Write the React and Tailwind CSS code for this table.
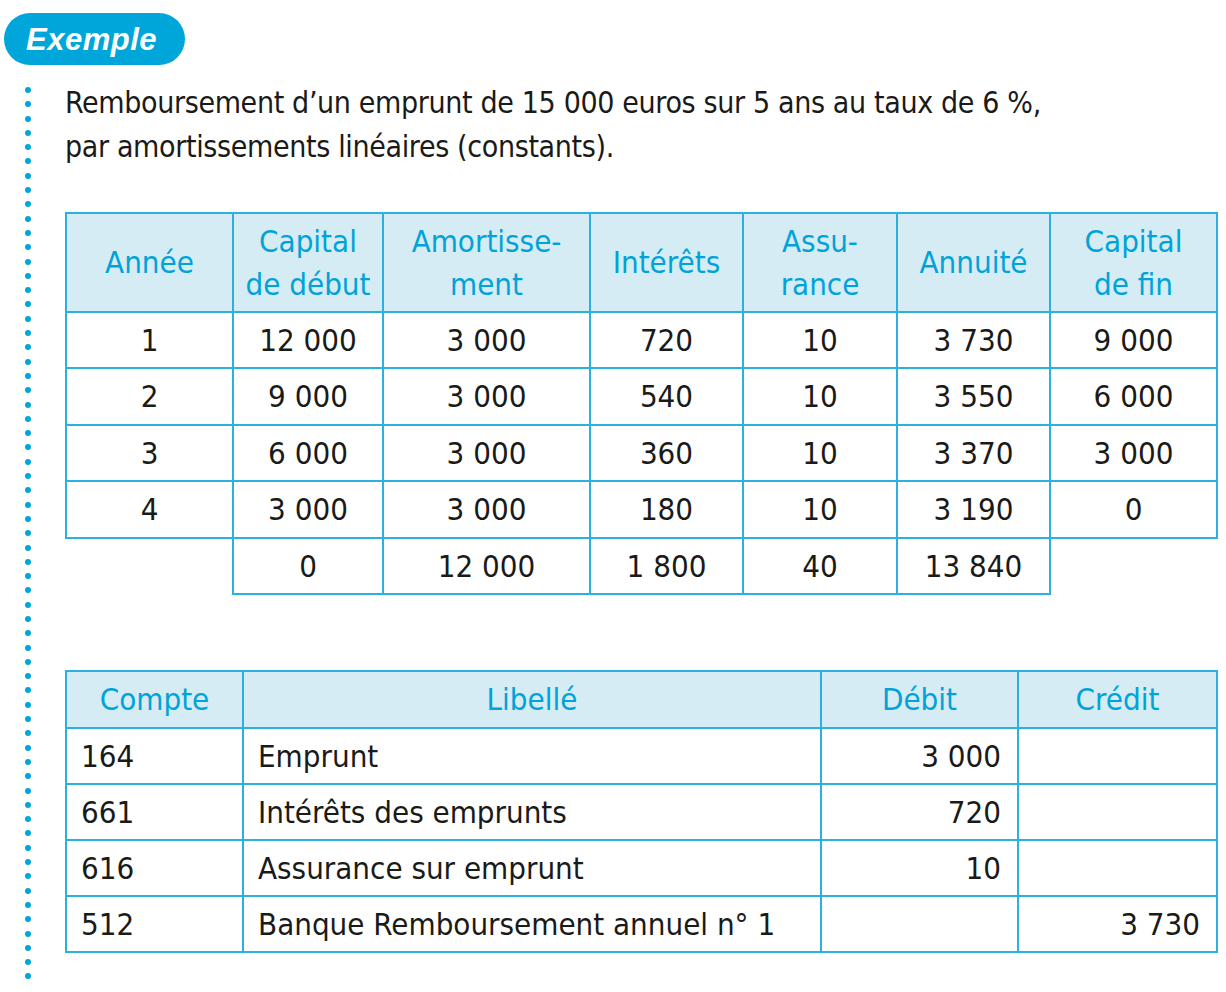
import React from "react";

const FONT = "font-['DejaVu_Sans_Condensed','Liberation_Sans',sans-serif]";

const headers1 = [
  ["Année"],
  ["Capital", "de début"],
  ["Amortisse-", "ment"],
  ["Intérêts"],
  ["Assu-", "rance"],
  ["Annuité"],
  ["Capital", "de fin"],
];

const rows1 = [
  ["1", "12 000", "3 000", "720", "10", "3 730", "9 000"],
  ["2", "9 000", "3 000", "540", "10", "3 550", "6 000"],
  ["3", "6 000", "3 000", "360", "10", "3 370", "3 000"],
  ["4", "3 000", "3 000", "180", "10", "3 190", "0"],
];
const totals = ["0", "12 000", "1 800", "40", "13 840"];
const widths1 = [167, 150, 207, 153, 154, 153, 167];

const rows2 = [
  ["164", "Emprunt", "3 000", ""],
  ["661", "Intérêts des emprunts", "720", ""],
  ["616", "Assurance sur emprunt", "10", ""],
  ["512", "Banque Remboursement annuel n° 1", "", "3 730"],
];

const B = "border-2 border-[#2cb0e1]";

export default function App() {
  const dots = Array.from({ length: 63 });
  return (
    <div className={`w-[1226px] h-[992px] bg-white overflow-hidden ${FONT} text-[#1a1a18]`}>
      <div className="pt-[13px] pl-[4px]">
        <div className="w-[181px] h-[52px] rounded-full bg-[#00a6da] flex items-center pl-[22px]">
          <span className="text-white italic font-bold text-[31px] leading-none tracking-[0.5px] font-['Liberation_Sans',sans-serif]">
            Exemple
          </span>
        </div>
      </div>
      <div className="flex">
        <div className="w-[65px] flex flex-col items-center pt-[22px] pr-[9px] gap-[8.3px] shrink-0">
          {dots.map((_, i) => (
            <div key={i} className="w-[6px] h-[6px] rounded-full bg-[#00a6da]" />
          ))}
        </div>
        <div className="flex-1">
          <p className="mt-[16px] text-[30px] leading-[44px] tracking-[-0.35px]">
            Remboursement d’un emprunt de 15 000 euros sur 5 ans au taux de 6 %,
            <br />
            par amortissements linéaires (constants).
          </p>

          <table className="mt-[43px] table-fixed border-collapse w-[1151px] text-[31px]">
            <colgroup>
              {widths1.map((w, i) => (
                <col key={i} style={{ width: w }} />
              ))}
            </colgroup>
            <thead>
              <tr className="h-[99px] bg-[#d5ecf4]">
                {headers1.map((h, i) => (
                  <th key={i} className={`${B} font-normal text-[#00a3d9] leading-[43px] text-center align-middle`}>
                    {h.map((l, j) => (
                      <div key={j}>{l}</div>
                    ))}
                  </th>
                ))}
              </tr>
            </thead>
            <tbody>
              {rows1.map((r, i) => (
                <tr key={i} className={i % 2 === 0 ? "h-[56px]" : "h-[57px]"}>
                  {r.map((c, j) => (
                    <td key={j} className={`${B} text-center leading-none`}>
                      {c}
                    </td>
                  ))}
                </tr>
              ))}
              <tr className="h-[56px]">
                <td className="border-0"></td>
                {totals.map((c, j) => (
                  <td key={j} className={`${B} text-center leading-none`}>
                    {c}
                  </td>
                ))}
                <td className="border-0"></td>
              </tr>
            </tbody>
          </table>

          <table className="mt-[75px] table-fixed border-collapse w-[1151px] text-[31px]">
            <colgroup>
              <col style={{ width: 177 }} />
              <col style={{ width: 578 }} />
              <col style={{ width: 197 }} />
              <col style={{ width: 199 }} />
            </colgroup>
            <thead>
              <tr className="h-[57px] bg-[#d5ecf4]">
                {["Compte", "Libellé", "Débit", "Crédit"].map((h, i) => (
                  <th key={i} className={`${B} font-normal text-[#00a3d9] text-center leading-none`}>
                    {h}
                  </th>
                ))}
              </tr>
            </thead>
            <tbody>
              {rows2.map((r, i) => (
                <tr key={i} className="h-[56px]">
                  <td className={`${B} text-left pl-[14px] leading-none`}>{r[0]}</td>
                  <td className={`${B} text-left pl-[14px] leading-none`}>{r[1]}</td>
                  <td className={`${B} text-right pr-[16px] leading-none`}>{r[2]}</td>
                  <td className={`${B} text-right pr-[16px] leading-none`}>{r[3]}</td>
                </tr>
              ))}
            </tbody>
          </table>
        </div>
      </div>
    </div>
  );
}
